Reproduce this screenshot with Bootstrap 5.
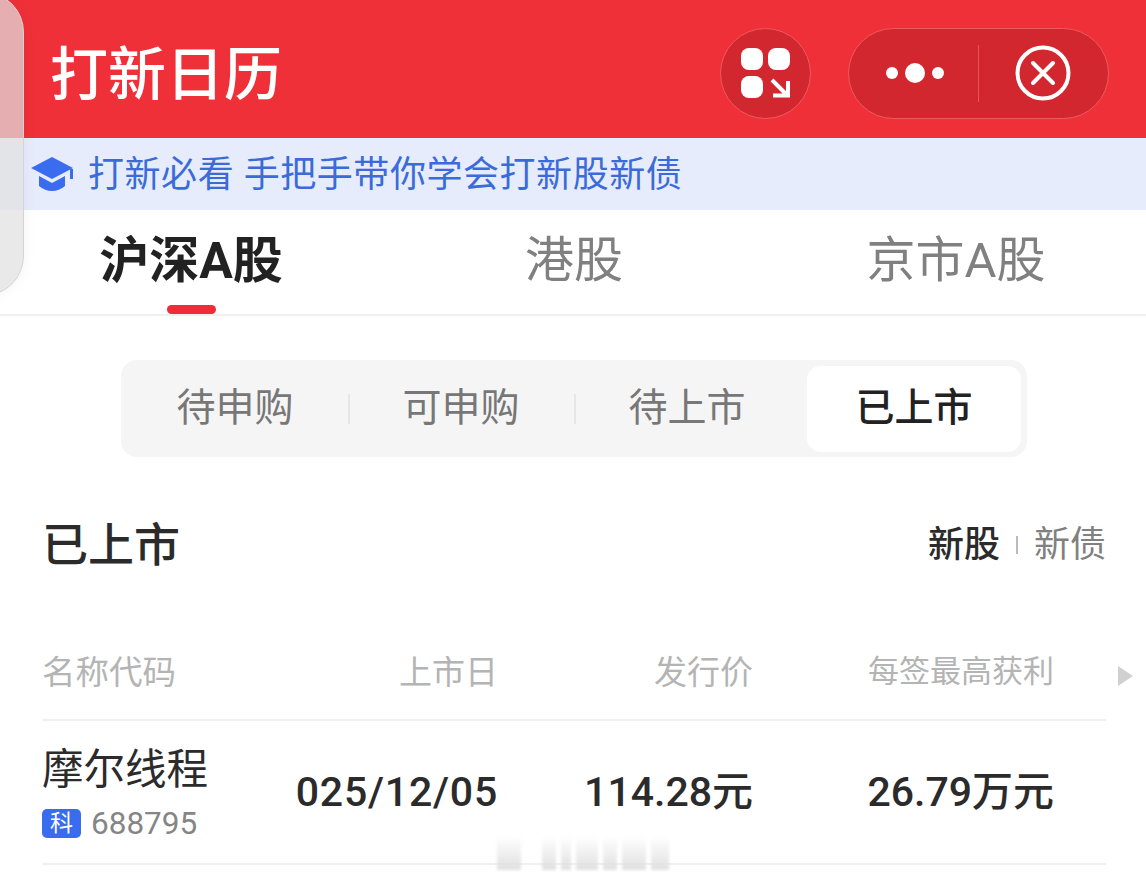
<!DOCTYPE html>
<html lang="zh-CN">
  <head>
    <meta charset="utf-8" />
    <meta name="viewport" content="width=device-width, initial-scale=1" />
    <link href="https://cdn.jsdelivr.net/npm/bootstrap@5.3.0/dist/css/bootstrap.min.css" rel="stylesheet" />
    <title>打新日历</title>
    <style>
      body {
        font-family: Roboto, "Noto Sans CJK SC", sans-serif;
        color: #2b2b2b;
        background: #fff;
        height: 884px;
        overflow: hidden;
      }
      .app-head { height: 138px; background: #f03038; padding: 8px 37px 0 50px; }
      .app-title { font-size: 58px; line-height: 1; color: #fff; font-weight: 500; margin-top: 4px; }
      .round-btn {
        width: 91px; height: 91px; border-radius: 50%;
        background: #d3272f; border: 1px solid #ee5a60; margin-right: 37px;
      }
      .capsule {
        width: 261px; height: 91px; border-radius: 46px;
        background: #d3272f; border: 1px solid #ee5a60;
      }
      .capsule > div { flex: 1; }
      .capsule-line { flex: none !important; width: 1px; height: 57px; background: #e4565c; margin-left: -2px; }
      .dots-wrap { padding-left: 2px; }
      .close-wrap { padding-right: 1px; }
      .promo { height: 72px; background: #e6ecfb; padding-left: 31px; color: #3a6bd8; font-size: 36px; gap: 14px; }
      .promo span { line-height: 1; letter-spacing: .55px; margin-top: 2px; }
      .market-tabs { height: 106px; border-bottom: 2px solid #f0f0f0; }
      .market-tab { flex: 0 0 382px; font-size: 49px; line-height: 1; color: #808080; padding: 0 0 3px 2px; }
      .market-tab.on { color: #222; font-weight: 700; font-size: 50px; padding-left: 0; }
      .tab-mark {
        position: absolute; left: 167px; bottom: 0; width: 49px; height: 9px;
        border-radius: 5px; background: #f02b3a;
      }
      .seg-box {
        width: 906px; height: 97px; margin: 44px 0 0 121px; padding: 5px;
        background: #f5f5f5; border-radius: 16px;
      }
      .seg-item { width: 224px; padding-right: 6px; font-size: 39px; color: #777; line-height: 1; }
      .seg-item.on { width: 214px; height: 86px; padding-right: 0; margin-left: 5px; background: #fff; border-radius: 14px; color: #222; font-weight: 500; }
      .seg-line { width: 2px; height: 30px; background: #e6e6e6; margin: 0 2px 0 -2px; }
      .list-head { padding: 0 40px 0 42px; margin-top: 60px; height: 56px; }
      .list-title { font-size: 46px; font-weight: 500; line-height: 1; color: #2b2b2b; }
      .kind { font-size: 36px; line-height: 1; color: #808080; }
      .kind.on { color: #2b2b2b; font-weight: 500; }
      .kind-line { width: 2px; height: 18px; background: #bbb; margin: 0 16px; }
      .col-labels { margin: 61px 40px 0 42px; height: 87px; border-bottom: 2px solid #f0f0f0; color: #b4b4b4; font-size: 33px; line-height: 1; padding-bottom: 30px; position: relative; }
      .col-labels .cell-name { font-size: 33.5px; white-space: nowrap; }
      .cell-name { width: 165px; }
      .cell-date { width: 291px; text-align: right; }
      .cell-price { width: 255px; text-align: right; }
      .cell-profit { width: 301px; text-align: right; }
      .cell-profit.head { font-size: 31px; margin-bottom: 2px; }
      .more-arrow {
        position: absolute; right: -27px; top: 32px; width: 0; height: 0;
        border-left: 15px solid #d0d0d0; border-top: 10px solid transparent; border-bottom: 10px solid transparent;
      }
      .stock-row { margin: 0 40px 0 42px; height: 144px; border-bottom: 2px solid #f0f0f0; }
      .stock-name { font-size: 41.5px; line-height: 1; color: #2b2b2b; margin-top: 28px; }
      .stock-code { color: #858585; font-size: 31.5px; line-height: 1; margin-top: 17px; gap: 10px; }
      .sci-tag { width: 39px; height: 29px; background: #3a6cf0; color: #fff; border-radius: 5px; font-size: 23px; line-height: 1; }
      .stock-val { font-size: 41px; font-weight: 500; line-height: 1; color: #2b2b2b; }
      .date-val { letter-spacing: .8px; }
      .side-float {
        position: absolute; left: -40px; top: -8px; width: 64px; height: 304px;
        border-radius: 0 40px 40px 0; background: rgba(225,225,225,.72);
        border: 1px solid #d4d4d4; box-shadow: 0 0 14px rgba(0,0,0,.05);
      }
      .wm-bar { position: absolute; left: 497px; top: 836px; filter: blur(1.5px); gap: 5px; }
      .wm-bar i { display: block; height: 34px; background: linear-gradient(rgba(225,225,225,0), #e0e0e0); }
      .wm-gap { margin-right: 16px; }
    </style>
  </head>
  <body class="position-relative">
    <header class="app-head d-flex align-items-center">
      <div class="app-title flex-grow-1">打新日历</div>
      <div class="round-btn d-flex align-items-center justify-content-center">
        <svg width="49" height="50" viewBox="0 0 49 50" fill="#fff">
          <rect x="0" y="0" width="22" height="22" rx="8" />
          <rect x="27" y="0" width="22" height="22" rx="8" />
          <rect x="0" y="28" width="22" height="22" rx="8" />
          <path d="M31 32 L46 47 M32 47.5 H47 V33" fill="none" stroke="#fff" stroke-width="4" />
        </svg>
      </div>
      <div class="capsule d-flex align-items-center">
        <div class="dots-wrap d-flex align-items-center justify-content-center">
          <svg width="58" height="20" viewBox="0 0 58 20" fill="#fff">
            <circle cx="6" cy="10" r="6" />
            <circle cx="29" cy="10" r="10" />
            <circle cx="52" cy="10" r="6" />
          </svg>
        </div>
        <div class="capsule-line"></div>
        <div class="close-wrap d-flex align-items-center justify-content-center">
          <svg width="56" height="56" viewBox="0 0 56 56" fill="none" stroke="#fff" stroke-width="4">
            <circle cx="28" cy="28" r="25.5" />
            <path d="M18 18 L38 38 M38 18 L18 38" stroke-linecap="round" />
          </svg>
        </div>
      </div>
    </header>

    <div class="promo d-flex align-items-center">
      <svg width="43" height="36" viewBox="0 0 43 36" fill="#3a6cf0">
        <path d="M21 1 L42 12 L21 23 L0 12 Z" />
        <path d="M8 20 L21 27 L34 20 V30 Q28 35 21 35 Q14 35 8 30 Z" />
        <path d="M39 13 H42 V23 H39 Z" />
      </svg>
      <span>打新必看 手把手带你学会打新股新债</span>
    </div>

    <nav class="market-tabs d-flex position-relative">
      <div class="market-tab on d-flex align-items-center justify-content-center">沪深A股</div>
      <div class="market-tab d-flex align-items-center justify-content-center">港股</div>
      <div class="market-tab d-flex align-items-center justify-content-center">京市A股</div>
      <div class="tab-mark"></div>
    </nav>

    <div class="seg-box d-flex align-items-center">
      <div class="seg-item text-center">待申购</div>
      <div class="seg-line"></div>
      <div class="seg-item text-center">可申购</div>
      <div class="seg-line"></div>
      <div class="seg-item text-center">待上市</div>
      <div class="seg-item on d-flex align-items-center justify-content-center">已上市</div>
    </div>

    <div class="list-head d-flex align-items-center justify-content-between">
      <div class="list-title">已上市</div>
      <div class="d-flex align-items-center">
        <span class="kind on">新股</span>
        <span class="kind-line"></span>
        <span class="kind">新债</span>
      </div>
    </div>

    <div class="col-labels d-flex align-items-end">
      <div class="cell-name">名称代码</div>
      <div class="cell-date">上市日</div>
      <div class="cell-price">发行价</div>
      <div class="cell-profit head">每签最高获利</div>
      <div class="more-arrow"></div>
    </div>

    <div class="stock-row d-flex">
      <div class="cell-name">
        <div class="stock-name text-nowrap">摩尔线程</div>
        <div class="stock-code d-flex align-items-center">
          <span class="sci-tag d-flex align-items-center justify-content-center">科</span>
          <span>688795</span>
        </div>
      </div>
      <div class="cell-date stock-val date-val align-self-center">025/12/05</div>
      <div class="cell-price stock-val align-self-center">114.28元</div>
      <div class="cell-profit stock-val align-self-center">26.79万元</div>
    </div>

    <div class="side-float"></div>
    <div class="wm-bar d-flex">
      <i class="wm-gap" style="width: 24px"></i><i style="width: 14px"></i><i style="width: 10px"></i><i style="width: 22px"></i><i style="width: 14px"></i><i style="width: 24px"></i><i style="width: 18px"></i>
    </div>

    <script src="https://cdn.jsdelivr.net/npm/bootstrap@5.3.0/dist/js/bootstrap.bundle.min.js"></script>
  </body>
</html>
